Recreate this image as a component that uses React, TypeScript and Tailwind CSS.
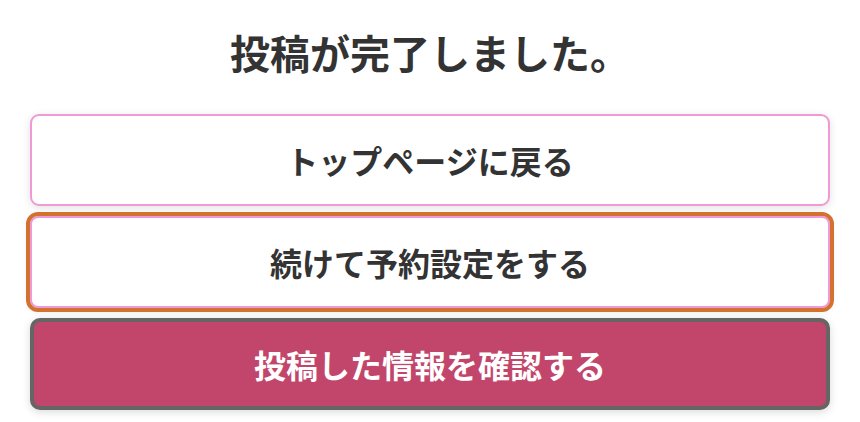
export default function App() {
  return (
    <div
      className="w-[860px] h-[422px] bg-white px-[30px] pt-[32px] text-[#333333]"
      style={{ fontFamily: '"Noto Sans CJK JP", "Noto Sans", sans-serif' }}
    >
      <h1 className="text-center text-[40px] leading-[40px] font-bold">投稿が完了しました。</h1>
      <div className="mt-[42px] flex flex-col gap-[10px]">
        <button className="h-[92px] w-full rounded-[9px] border-2 border-[#ef9ad6] bg-white text-[32px] font-bold text-[#333333] shadow-[0_2px_8px_rgba(0,0,0,0.12)]">
          トップページに戻る
        </button>
        <button className="h-[92px] w-full rounded-[8px] border-2 border-[#ef9ad6] bg-white text-[32px] font-bold text-[#333333] outline-[4px] outline-solid outline-[#d3712f] shadow-[0_2px_8px_rgba(0,0,0,0.12)]">
          続けて予約設定をする
        </button>
        <button className="h-[92px] w-full rounded-[10px] border-4 border-[#656565] bg-[#c2466b] text-[32px] font-bold text-white shadow-[0_2px_8px_rgba(0,0,0,0.15)]">
          投稿した情報を確認する
        </button>
      </div>
    </div>
  );
}
